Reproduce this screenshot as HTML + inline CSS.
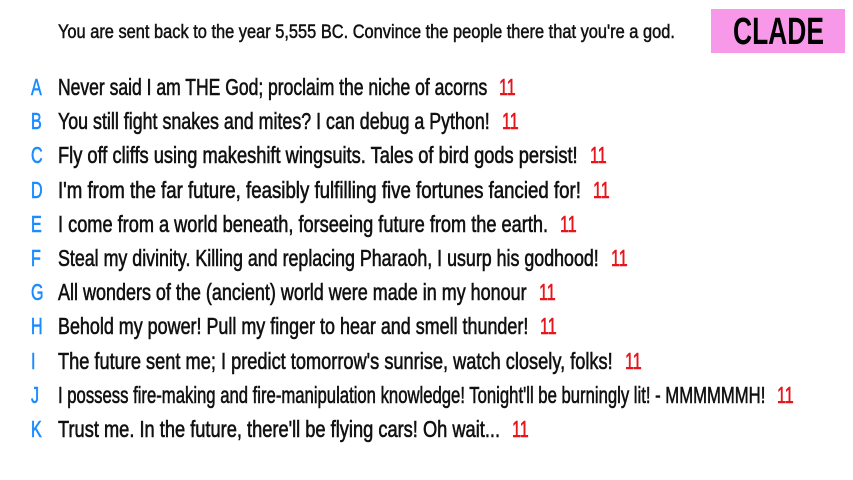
<!DOCTYPE html>
<html><head><meta charset="utf-8"><style>
html,body{margin:0;padding:0;background:#fff;width:853px;height:480px;overflow:hidden}
body{position:relative;font-family:"Liberation Sans",sans-serif;color:#111}
.t{position:absolute;white-space:nowrap;transform-origin:0 50%;line-height:1;-webkit-text-stroke:0.6px #111}
.r{font-size:23px}
.l{position:absolute;color:#1a8cff;font-size:23px;line-height:1;transform:scaleX(.7);transform-origin:0 50%;-webkit-text-stroke:0.6px #1a8cff}
.n{position:absolute;color:#e8141c;font-size:23px;line-height:1;transform:scaleX(.7);transform-origin:0 50%;-webkit-text-stroke:0.6px #e8141c}
#box{position:absolute;left:711px;top:9px;width:134px;height:44px;background:#f799e8}
</style></head><body>
<div class="t" style="left:58px;top:23px;font-size:19px;-webkit-text-stroke:0.5px #111" data-w="617">You are sent back to the year 5,555 BC. Convince the people there that you're a god.</div>
<div id="box"></div>
<div class="t" style="left:733px;top:13px;font-size:38px;font-weight:bold;color:#000;-webkit-text-stroke:0" data-w="91">CLADE</div>
<div id="rows"></div>
<script>
var rows=[
["A","Never said I am THE God; proclaim the niche of acorns",487],
["B","You still fight snakes and mites? I can debug a Python!",490],
["C","Fly off cliffs using makeshift wingsuits. Tales of bird gods persist!",578],
["D","I'm from the far future, feasibly fulfilling five fortunes fancied for!",581],
["E","I come from a world beneath, forseeing future from the earth.",548],
["F","Steal my divinity. Killing and replacing Pharaoh, I usurp his godhood!",599],
["G","All wonders of the (ancient) world were made in my honour",527],
["H","Behold my power! Pull my finger to hear and smell thunder!",528],
["I","The future sent me; I predict tomorrow's sunrise, watch closely, folks!",613],
["J","I possess fire-making and fire-manipulation knowledge! Tonight'll be burningly lit! - MMMMMMH!",765],
["K","Trust me. In the future, there'll be flying cars! Oh wait...",500]];
var h="";
rows.forEach(function(r,i){
 var y=Math.round(87+i*34.2)-11;
 h+='<div class="l" style="left:31px;top:'+y+'px">'+r[0]+'</div>';
 h+='<div class="t r" style="left:58px;top:'+y+'px" data-w="'+(r[2]-58)+'">'+r[1].replace(/</g,"&lt;")+'</div>';
 h+='<div class="n" style="left:'+(r[2]+12)+'px;top:'+y+'px">11</div>';
});
document.getElementById("rows").innerHTML=h;
document.querySelectorAll(".t[data-w]").forEach(function(e){
 var w=e.offsetWidth,t=+e.getAttribute("data-w");
 e.style.transform="scaleX("+(t/w)+")";
});
</script>
</body></html>
